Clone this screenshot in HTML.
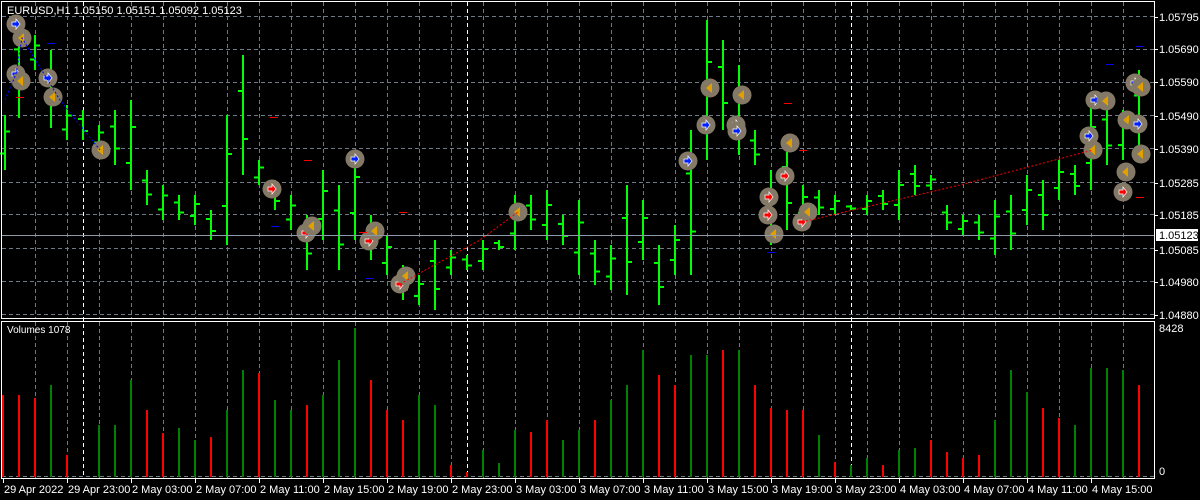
<!DOCTYPE html>
<html><head><meta charset="utf-8"><style>
html,body{margin:0;padding:0;background:#000;width:1200px;height:500px;overflow:hidden}
svg{display:block}
text{font-family:"Liberation Sans","DejaVu Sans",sans-serif;font-size:11px;fill:#fff}
</style></head><body>
<svg id="s" width="1200" height="500" xmlns="http://www.w3.org/2000/svg">
<rect width="1200" height="500" fill="#000"/>
<g id="grid" stroke="#6f7a86" stroke-width="1" stroke-dasharray="4,3"></g>
<g id="vol"></g>
<g id="bars" stroke="#00ff00" stroke-width="2"></g>
<g id="marks"></g>
<line x1="2" y1="235.5" x2="1154" y2="235.5" stroke="#8d99a6"/>
<rect x="1.5" y="1.5" width="1153" height="317" fill="none" stroke="#fff"/>
<rect x="1.5" y="321.5" width="1153" height="157" fill="none" stroke="#fff"/>
<text x="7" y="14">EURUSD,H1  1.05150 1.05151 1.05092 1.05123</text>
<text x="7" y="333" style="font-size:10px">Volumes 1078</text>
<g id="axis"></g>
<rect x="1156" y="229" width="42" height="12" fill="#fff"/>
<text x="1159" y="239" style="fill:#000">1.05123</text>
<text x="1159" y="332">8428</text>
<text x="1159" y="475">0</text>
</svg>
<script>
const NS="http://www.w3.org/2000/svg";
function el(p,t,a,txt){const e=document.createElementNS(NS,t);for(const k in a)e.setAttribute(k,a[k]);if(txt)e.textContent=txt;document.getElementById(p).appendChild(e);return e;}
for(let x=35;x<1154;x+=32){el('grid','line',{x1:x+.5,y1:2,x2:x+.5,y2:318});el('grid','line',{x1:x+.5,y1:322,x2:x+.5,y2:478});}
[16,49,82,115,148,182,214,248,281,314].forEach(y=>el('grid','line',{x1:2,y1:y+.5,x2:1154,y2:y+.5}));
el('grid','line',{x1:2,y1:476.5,x2:1154,y2:476.5});
[83,467,851].forEach(x=>{el('grid','line',{x1:x+.5,y1:2,x2:x+.5,y2:478,stroke:'#fff'})});
const pl=[["1.05795",17],["1.05690",49],["1.05590",82],["1.05490",116],["1.05390",149],["1.05285",183],["1.05185",215],["1.05085",250],["1.04980",282],["1.04880",315]];
pl.forEach(p=>{el('axis','line',{x1:1154,y1:p[1]+.5,x2:1158,y2:p[1]+.5,stroke:'#fff'});el('axis','text',{x:1159,y:p[1]+4},p[0]);});
const tl=["29 Apr 2022","29 Apr 23:00","2 May 03:00","2 May 07:00","2 May 11:00","2 May 15:00","2 May 19:00","2 May 23:00","3 May 03:00","3 May 07:00","3 May 11:00","3 May 15:00","3 May 19:00","3 May 23:00","4 May 03:00","4 May 07:00","4 May 11:00","4 May 15:00"];
tl.forEach((t,i)=>{const x=3+64*i;el('axis','line',{x1:x+.5,y1:479,x2:x+.5,y2:483,stroke:'#fff'});el('axis','text',{x:x+1,y:493},t);});
const B=[[5,115,170],[19,20,118],[35,35,70],[51,50,128],[67,105,140],[83,110,140],[99,125,150],[115,110,165],[131,100,190],[147,170,205],[163,185,220],[179,195,220],[195,195,225],[211,210,240],[227,115,245],[243,55,175],[259,160,185],[275,180,210],[291,195,230],[307,215,270],[323,170,240],[339,185,270],[355,150,240],[371,215,260],[387,235,275],[403,265,300],[419,275,305],[435,240,310],[451,250,275],[467,255,270],[483,240,270],[499,240,250],[515,195,250],[531,195,230],[547,190,240],[563,215,245],[579,200,275],[595,240,285],[611,245,290],[627,185,295],[643,200,260],[659,245,305],[675,225,275],[691,130,275],[707,20,160],[723,40,130],[739,65,155],[755,130,165],[771,170,245],[787,140,230],[803,185,225],[819,190,215],[835,195,215],[851,205,210],[867,195,215],[883,190,210],[899,170,220],[915,165,195],[931,175,190],[947,205,230],[963,215,235],[979,215,240],[995,200,255],[1011,195,250],[1027,175,225],[1043,180,230],[1059,160,200],[1075,165,195],[1091,100,190],[1107,100,165],[1123,110,160],[1139,70,155]];
B.forEach((b,i)=>{const [x,t,bt]=b;const o=t+(bt-t)*(i%2?0.3:0.7),c=t+(bt-t)*(i%2?0.7:0.3);
el('bars','line',{x1:x,y1:t,x2:x,y2:bt});el('bars','line',{x1:x-5,y1:o,x2:x,y2:o});el('bars','line',{x1:x,y1:c,x2:x+5,y2:c});});
const V=[[3,395,'r'],[19,395,'r'],[35,398,'r'],[51,385,'g'],[67,455,'r'],[99,425,'g'],[115,425,'g'],[131,380,'g'],[147,410,'r'],[163,433,'r'],[179,428,'g'],[195,440,'g'],[211,437,'r'],[227,410,'g'],[243,370,'g'],[259,373,'r'],[275,400,'g'],[291,410,'g'],[307,405,'r'],[323,395,'g'],[339,360,'g'],[355,328,'g'],[371,380,'r'],[387,410,'r'],[403,420,'r'],[419,395,'g'],[435,405,'g'],[451,465,'r'],[467,472,'r'],[483,450,'g'],[499,463,'g'],[515,430,'g'],[531,432,'r'],[547,420,'r'],[563,440,'g'],[579,430,'g'],[595,420,'r'],[611,400,'g'],[627,385,'g'],[643,350,'g'],[659,375,'r'],[675,385,'r'],[691,355,'g'],[707,355,'g'],[723,350,'r'],[739,350,'g'],[755,385,'r'],[771,408,'r'],[787,410,'r'],[803,410,'r'],[819,435,'g'],[835,462,'r'],[851,465,'g'],[867,458,'g'],[883,465,'r'],[899,450,'g'],[915,448,'g'],[931,440,'r'],[947,452,'r'],[963,458,'r'],[979,455,'r'],[995,420,'g'],[1011,370,'g'],[1027,392,'g'],[1043,408,'r'],[1059,418,'r'],[1075,425,'g'],[1091,368,'g'],[1107,368,'g'],[1123,370,'g'],[1139,385,'r']];
V.forEach(v=>el('vol','line',{x1:v[0],y1:v[1],x2:v[0],y2:477,stroke:v[2]=='r'?'#ff0000':'#008000','stroke-width':2}));
const C=[[16,24,'b'],[22,38,'y'],[16,74,'b'],[21,81,'y'],[48,78,'b'],[53,97,'y'],[101,150,'y'],[272,189,'r'],[306,233,'r'],[312,226,'y'],[355,159,'b'],[369,241,'r'],[375,231,'y'],[400,284,'r'],[406,276,'y'],[518,212,'y'],[688,161,'b'],[706,125,'b'],[710,88,'y'],[736,125,'b'],[742,95,'y'],[737,131,'b'],[769,197,'r'],[774,234,'y'],[768,215,'r'],[785,176,'r'],[790,143,'y'],[802,222,'r'],[808,212,'y'],[1089,136,'b'],[1093,150,'y'],[1095,100,'b'],[1106,101,'y'],[1123,192,'r'],[1127,120,'y'],[1138,124,'b'],[1126,172,'y'],[1135,83,'b'],[1141,87,'y'],[1141,154,'y']];
C.forEach(c=>{const [x,y,t]=c;el('marks','circle',{cx:x,cy:y,r:9.5,fill:'#847966'});
if(t=='y')el('marks','polygon',{points:`${x-4},${y} ${x+2},${y-5} ${x+2},${y+5}`,fill:'#e0a000'});
else el('marks','polygon',{points:`${x-4},${y-2} ${x},${y-2} ${x},${y-5} ${x+4},${y} ${x},${y+5} ${x},${y+2} ${x-4},${y+2}`,fill:t=='b'?'#0020ff':'#ff0000',stroke:'#fff','stroke-width':0.7});});
[[51,43,'#00f'],[20,97,'#f00'],[308,160,'#f00'],[403,212,'#f00'],[788,103,'#f00'],[803,150,'#f00'],[1110,64,'#00f'],[1140,197,'#f00'],[1140,46,'#00f'],[370,278,'#00f'],[275,226,'#00f'],[771,252,'#00f'],[274,117,'#f00'],[363,232,'#f00']].forEach(d=>el('marks','line',{x1:d[0]-4,y1:d[1]+.5,x2:d[0]+4,y2:d[1]+.5,stroke:d[2],'stroke-width':1}));
el('marks','polyline',{points:'5,100 16,74 22,38 60,100 100,150',fill:'none',stroke:'#00f','stroke-dasharray':'2,2'});
el('marks','polyline',{points:'400,284 480,240 518,212',fill:'none',stroke:'#f00','stroke-dasharray':'2,2'});
el('marks','polyline',{points:'802,222 960,185 1093,150',fill:'none',stroke:'#f00','stroke-dasharray':'2,2'});
</script>
</body></html>
